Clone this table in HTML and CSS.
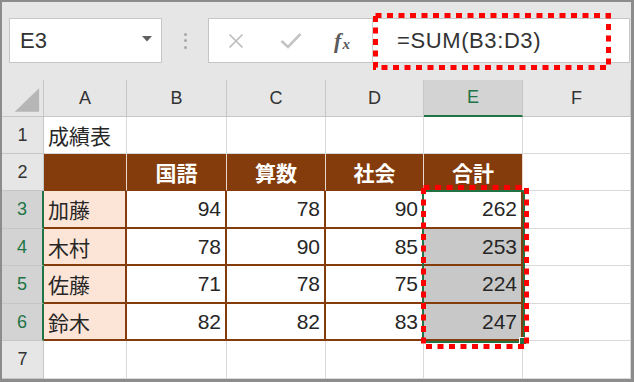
FILE: index.html
```html
<!DOCTYPE html>
<html lang="ja">
<head>
<meta charset="utf-8">
<title>成績表</title>
<link rel="stylesheet" href="styles.css">
</head>
<body>
<div class="frame">
  <div class="fbar">
    <div class="namebox">
      <span class="nb-text">E3</span>
      <svg class="dd" width="10" height="6" viewBox="0 0 10 6"><path d="M0 0 H10 L5 5.5 Z" fill="#5f5f5f"/></svg>
    </div>
    <div class="grip"><i></i><i></i><i></i></div>
    <div class="fbox">
      <span class="slot slot-x">
        <svg width="16" height="16" viewBox="0 0 16 16"><path d="M1.5 1.5 L14.5 14.5 M14.5 1.5 L1.5 14.5" stroke="#bdbdbd" stroke-width="1.7" fill="none"/></svg>
      </span>
      <span class="slot slot-ok">
        <svg width="22" height="17" viewBox="0 0 22 17"><path d="M1.5 9 L8 15 L20.5 2" stroke="#c4c4c4" stroke-width="2.6" fill="none"/></svg>
      </span>
      <span class="slot slot-fx"><span class="fx">f<span class="fx-x">x</span></span></span>
      <div class="finput">=SUM(B3:D3)</div>
    </div>
  </div>

  <div class="sheet">
    <div class="hd corner"><svg width="42" height="37" viewBox="0 0 42 37"><path d="M38 8 V32 H13 Z" fill="#b6b6b6"/></svg></div>
    <div class="hd">A</div>
    <div class="hd">B</div>
    <div class="hd">C</div>
    <div class="hd">D</div>
    <div class="hd sel colsel">E</div>
    <div class="hd">F</div>

    <div class="hd">1</div>
    <div class="c">成績表</div>
    <div class="c"></div>
    <div class="c"></div>
    <div class="c"></div>
    <div class="c"></div>
    <div class="c"></div>

    <div class="hd">2</div>
    <div class="c th"></div>
    <div class="c th">国語</div>
    <div class="c th">算数</div>
    <div class="c th">社会</div>
    <div class="c th">合計</div>
    <div class="c"></div>

    <div class="hd sel rowsel">3</div>
    <div class="c td name">加藤</div>
    <div class="c td num">94</div>
    <div class="c td num">78</div>
    <div class="c td num">90</div>
    <div class="c td num">262</div>
    <div class="c"></div>

    <div class="hd sel rowsel">4</div>
    <div class="c td name">木村</div>
    <div class="c td num">78</div>
    <div class="c td num">90</div>
    <div class="c td num">85</div>
    <div class="c td num hl">253</div>
    <div class="c"></div>

    <div class="hd sel rowsel">5</div>
    <div class="c td name">佐藤</div>
    <div class="c td num">71</div>
    <div class="c td num">78</div>
    <div class="c td num">75</div>
    <div class="c td num hl">224</div>
    <div class="c"></div>

    <div class="hd sel rowsel">6</div>
    <div class="c td name">鈴木</div>
    <div class="c td num">82</div>
    <div class="c td num">82</div>
    <div class="c td num">83</div>
    <div class="c td num hl">247</div>
    <div class="c"></div>

    <div class="hd">7</div>
    <div class="c"></div>
    <div class="c"></div>
    <div class="c"></div>
    <div class="c"></div>
    <div class="c"></div>
    <div class="c"></div>

    <div class="selection"></div>
    <div class="handle"></div>
  </div>

  <svg class="marks" width="634" height="382" viewBox="0 0 634 382">
    <rect x="375.5" y="15.5" width="233" height="52" class="dots"/>
    <rect x="423.5" y="187.5" width="103" height="159" class="dots"/>
  </svg>
</div>
</body>
</html>
```

FILE: styles.css
```css
html, body {
  margin: 0;
  padding: 0;
  background: #ffffff;
}

.frame {
  position: relative;
  width: 634px;
  height: 382px;
  box-sizing: border-box;
  border-style: solid;
  border-color: #8c8c8c;
  border-width: 2px 3px 3px 2px;
  background: #e6e6e6;
  overflow: hidden;
  font-family: "Liberation Sans", "Noto Sans CJK JP", sans-serif;
  color: #262626;
}

/* formula bar */
.fbar {
  height: 78px;
  box-sizing: border-box;
  padding-top: 16px;
  display: flex;
  align-items: flex-start;
}

.namebox {
  margin-left: 7px;
  width: 153px;
  height: 45px;
  box-sizing: border-box;
  border: 1px solid #c6c6c6;
  background: #ffffff;
  display: flex;
  align-items: center;
  justify-content: space-between;
  padding: 0 9px 0 10px;
  font-size: 22px;
  color: #333333;
}

.dd {
  display: block;
  margin-top: -3px;
}

.grip {
  width: 46px;
  height: 45px;
  display: flex;
  flex-direction: column;
  align-items: center;
  justify-content: center;
  gap: 3.5px;
}

.grip i {
  display: block;
  width: 3px;
  height: 3px;
  border-radius: 50%;
  background: #a8a8a8;
}

.fbox {
  width: 422px;
  height: 45px;
  box-sizing: border-box;
  border: 1px solid #c6c6c6;
  background: #ffffff;
  display: flex;
  align-items: center;
}

.slot {
  height: 100%;
  display: flex;
  align-items: center;
  justify-content: center;
}

.slot svg {
  display: block;
}

.slot-x {
  width: 54px;
}

.slot-ok {
  width: 55px;
}

.slot-fx {
  width: 48px;
  padding-right: 6px;
}

.fx {
  font-family: "Liberation Serif", serif;
  font-style: italic;
  font-weight: bold;
  font-size: 22px;
  color: #5a5a5a;
}

.fx-x {
  font-size: 15px;
  position: relative;
  top: 1px;
  margin-left: 1px;
}

.finput {
  flex: 1;
  height: 100%;
  box-sizing: border-box;
  border-left: 1px solid #d0d0d0;
  padding-left: 24px;
  display: flex;
  align-items: center;
  font-size: 22px;
  letter-spacing: 0.6px;
  color: #333333;
}

/* sheet grid */
.sheet {
  position: relative;
  display: grid;
  grid-template-columns: 42px 83px 100px 99px 98px 99px 108px;
  grid-template-rows: 37px 37px 37px 38px 37px 38px 37px 38px;
}

.hd {
  box-sizing: border-box;
  background: #e6e6e6;
  border-right: 1px solid #c6c6c6;
  border-bottom: 1px solid #c6c6c6;
  display: flex;
  align-items: center;
  justify-content: center;
  font-size: 18px;
  color: #333333;
}

.corner svg {
  display: block;
}

.hd.sel {
  background: #d3d3d3;
  color: #217346;
}

.colsel {
  border-bottom: 2px solid #217346;
}

.rowsel {
  border-right: 2px solid #217346;
}

.c {
  box-sizing: border-box;
  background: #ffffff;
  border-right: 1px solid #d9d9d9;
  border-bottom: 1px solid #d9d9d9;
  display: flex;
  align-items: center;
  padding: 0 4px;
  font-size: 21px;
  color: #262626;
  white-space: nowrap;
}

.th {
  background: #843c0c;
  color: #ffffff;
  font-weight: bold;
  justify-content: center;
  border-right: 1px solid #ead7ca;
  border-bottom: 1px solid #843c0c;
}

.td {
  border-right: 2px solid #843c0c;
  border-bottom: 2px solid #843c0c;
}

.name {
  background: #fce4d6;
}

.num {
  justify-content: flex-end;
}

.hl {
  background: #c8c8c8;
}

.selection {
  position: absolute;
  left: 420px;
  top: 110px;
  width: 103px;
  height: 153px;
  box-sizing: border-box;
  border: 2px solid #217346;
  pointer-events: none;
}

.handle {
  position: absolute;
  left: 517px;
  top: 257px;
  width: 8px;
  height: 8px;
  box-sizing: border-box;
  background: #217346;
  border: 1px solid #ffffff;
}

/* red dotted annotation */
.marks {
  position: absolute;
  left: -2px;
  top: -2px;
  pointer-events: none;
}

.dots {
  fill: none;
  stroke: #ff0000;
  stroke-width: 5;
  stroke-dasharray: 6 5.5;
}
```
